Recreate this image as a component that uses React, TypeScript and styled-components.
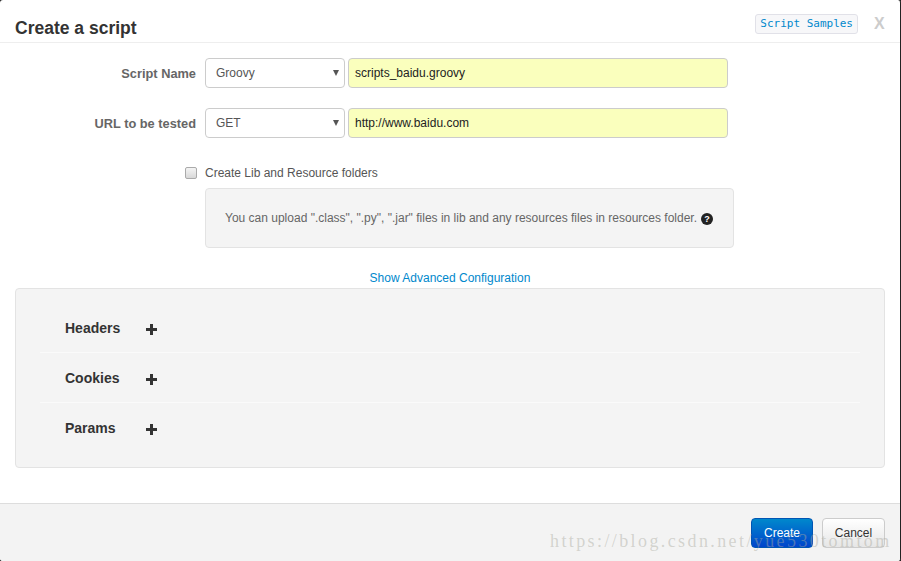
import React from 'react';
import styled, { createGlobalStyle } from 'styled-components';

const GlobalStyle = createGlobalStyle`
  html, body {
    margin: 0;
    padding: 0;
    background: #222;
  }
  * {
    box-sizing: border-box;
  }
`;

const Modal = styled.div`
  position: relative;
  width: 901px;
  height: 561px;
  overflow: hidden;
  display: flex;
  flex-direction: column;
  background: #fff;
  border-right: 1px solid #222;
  border-radius: 3px;
  font-family: 'Liberation Sans', Arial, sans-serif;
  font-size: 12px;
  color: #555;
`;

const Header = styled.div`
  height: 43px;
  flex: none;
  display: flex;
  align-items: center;
  justify-content: space-between;
  padding: 14px 15px 0 15px;
  border-bottom: 1px solid #eee;
`;

const Title = styled.h3`
  margin: 0;
  font-size: 17.5px;
  font-weight: 700;
  line-height: 28px;
  color: #333;
`;

const HeaderActions = styled.div`
  display: flex;
  align-items: center;
  gap: 16px;
  margin-top: -9px;
`;

const SamplesLink = styled.a`
  display: block;
  height: 20px;
  padding: 0 4px;
  border: 1px solid #e1e1e8;
  border-radius: 3px;
  background: #f7f7f9;
  font-family: 'DejaVu Sans Mono', monospace;
  font-size: 11px;
  line-height: 18px;
  color: #0088cc;
`;

const CloseMark = styled.span`
  width: 11px;
  font-size: 16px;
  font-weight: 700;
  line-height: 20px;
  color: #ccc;
`;

const Form = styled.div`
  flex: none;
  height: 460px;
  padding: 15px 15px 0 15px;
  display: flex;
  flex-direction: column;
`;

const FormRow = styled.div`
  display: flex;
  align-items: center;
  height: 30px;
  margin-bottom: 20px;
`;

const RowLabel = styled.label`
  width: 181px;
  margin-right: 9px;
  text-align: right;
  font-size: 12.8px;
  font-weight: 700;
  color: #666;
`;

const SelectBox = styled.div`
  position: relative;
  width: 140px;
  height: 30px;
  margin-right: 3px;
  padding-left: 10px;
  border: 1px solid #ccc;
  border-radius: 4px;
  background: #fff;
  line-height: 28px;
  color: #555;

  &::after {
    content: '';
    position: absolute;
    right: 5px;
    top: 11px;
    border-left: 3.5px solid transparent;
    border-right: 3.5px solid transparent;
    border-top: 6px solid #555;
  }
`;

const TextInput = styled.div`
  width: 380px;
  height: 30px;
  padding-left: 6px;
  border: 1px solid #ccc;
  border-radius: 4px;
  background: #faffbd;
  line-height: 28px;
  color: #222;
`;

const CheckRow = styled.div`
  display: flex;
  align-items: center;
  gap: 8px;
  height: 14px;
  margin: 8px 0 8px 170px;
  color: #555;
`;

const CheckBox = styled.span`
  width: 12px;
  height: 12px;
  border: 1px solid #aaa;
  border-radius: 2px;
  background: linear-gradient(#f4f4f4, #d8d8d8);
`;

const Well = styled.div`
  display: flex;
  align-items: center;
  gap: 4px;
  width: 529px;
  height: 60px;
  margin-left: 190px;
  padding: 0 19px;
  border: 1px solid #e3e3e3;
  border-radius: 4px;
  background: #f4f4f4;
  color: #666;
  white-space: nowrap;
`;

const HelpBadge = styled.span`
  width: 12px;
  height: 12px;
  flex: none;
  margin-top: 2px;
  border-radius: 50%;
  background: #222;
  color: #fff;
  font-size: 9px;
  font-weight: 700;
  line-height: 12px;
  text-align: center;
`;

const AdvancedLink = styled.a`
  display: block;
  height: 40px;
  padding-top: 23px;
  text-align: center;
  color: #0088cc;
  line-height: 14px;
`;

const AdvancedPanel = styled.div`
  height: 180px;
  padding: 14px 24px 0 24px;
  border: 1px solid #e3e3e3;
  border-radius: 4px;
  background: #f4f4f4;
`;

const ParamRow = styled.div`
  display: flex;
  align-items: center;
  height: 50px;
  padding: 0 0 0 25px;
  border-bottom: 1px solid #fafafa;

  &:last-child {
    border-bottom: 0;
  }
`;

const ParamName = styled.span`
  width: 81px;
  font-size: 14px;
  font-weight: 700;
  color: #333;
`;

const PlusIcon = styled.svg`
  width: 11px;
  height: 11px;
  margin-top: 3px;
  fill: #333;
`;

const Footer = styled.div`
  flex: 1;
  display: flex;
  justify-content: flex-end;
  align-items: flex-start;
  gap: 9px;
  padding: 14px 15px 0 0;
  border-top: 1px solid #ddd;
  background: #f3f3f3;
`;

const Button = styled.button<{ $primary?: boolean }>`
  width: ${({ $primary }) => ($primary ? '62px' : '63px')};
  height: 30px;
  padding: 0;
  border: 1px solid ${({ $primary }) => ($primary ? '#0055b3' : '#ccc')};
  border-radius: 4px;
  background: ${({ $primary }) =>
    $primary ? 'linear-gradient(#0088cc, #0044cc)' : 'linear-gradient(#fff, #e6e6e6)'};
  color: ${({ $primary }) => ($primary ? '#fff' : '#333')};
  font-family: inherit;
  font-size: 12px;
`;

const Watermark = styled.div`
  position: absolute;
  left: 550px;
  top: 531px;
  font-family: 'Liberation Serif', serif;
  font-size: 18px;
  letter-spacing: 2.4px;
  line-height: 20px;
  color: rgba(170, 170, 160, 0.45);
  white-space: nowrap;
`;

const params = ['Headers', 'Cookies', 'Params'];

const App: React.FC = () => (
  <>
    <GlobalStyle />
    <Modal>
      <Header>
        <Title>Create a script</Title>
        <HeaderActions>
          <SamplesLink>Script Samples</SamplesLink>
          <CloseMark>X</CloseMark>
        </HeaderActions>
      </Header>
      <Form>
        <FormRow>
          <RowLabel>Script Name</RowLabel>
          <SelectBox>Groovy</SelectBox>
          <TextInput>scripts_baidu.groovy</TextInput>
        </FormRow>
        <FormRow>
          <RowLabel>URL to be tested</RowLabel>
          <SelectBox>GET</SelectBox>
          <TextInput>http://www.baidu.com</TextInput>
        </FormRow>
        <CheckRow>
          <CheckBox />
          Create Lib and Resource folders
        </CheckRow>
        <Well>
          You can upload ".class", ".py", ".jar" files in lib and any resources files in resources folder.
          <HelpBadge>?</HelpBadge>
        </Well>
        <AdvancedLink>Show Advanced Configuration</AdvancedLink>
        <AdvancedPanel>
          {params.map(name => (
            <ParamRow key={name}>
              <ParamName>{name}</ParamName>
              <PlusIcon viewBox="0 0 11 11">
                <path d="M4 0h3v4h4v3H7v4H4V7H0V4h4z" />
              </PlusIcon>
            </ParamRow>
          ))}
        </AdvancedPanel>
      </Form>
      <Footer>
        <Button $primary>Create</Button>
        <Button>Cancel</Button>
      </Footer>
      <Watermark>https://blog.csdn.net/yue530tomtom</Watermark>
    </Modal>
  </>
);

export default App;
